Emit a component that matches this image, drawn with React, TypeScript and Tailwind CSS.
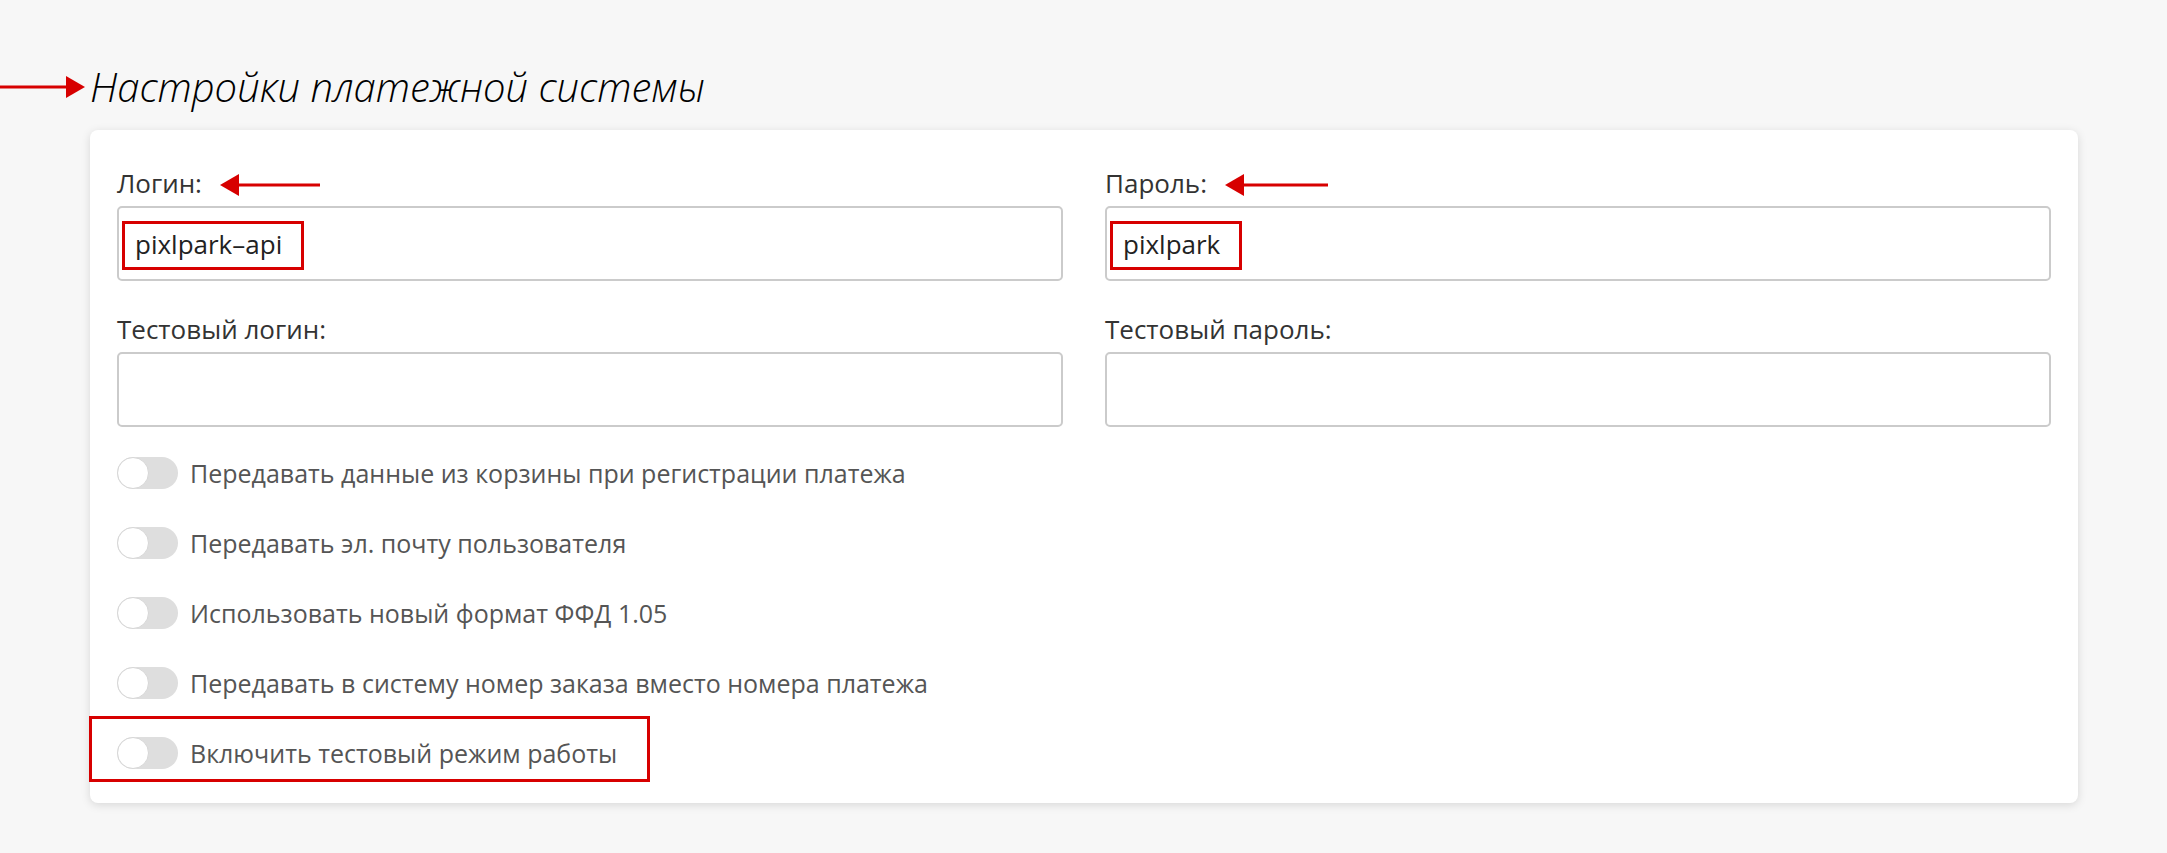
import React from 'react';

const font = { fontFamily: '"Open Sans", "Noto Sans", sans-serif' };

function Arrow({ dir, width }: { dir: 'left' | 'right'; width: number }) {
  // red annotation arrow: line + triangular head
  const h = 22;
  const mid = h / 2;
  return (
    <svg width={width} height={h} viewBox={`0 0 ${width} ${h}`} className="block shrink-0">
      {dir === 'right' ? (
        <>
          <rect x={0} y={mid - 1.5} width={width - 18} height={3} fill="#d70000" />
          <polygon points={`${width - 19},0 ${width},${mid} ${width - 19},${h}`} fill="#d70000" />
        </>
      ) : (
        <>
          <rect x={18} y={mid - 1.5} width={width - 18} height={3} fill="#d70000" />
          <polygon points={`19,0 0,${mid} 19,${h}`} fill="#d70000" />
        </>
      )}
    </svg>
  );
}

function Field({
  label,
  value,
  boxWidth,
  arrowWidth,
}: {
  label: string;
  value?: string;
  boxWidth?: number;
  arrowWidth?: number;
}) {
  return (
    <div className="flex flex-col">
      <div className="flex items-center h-[36px] mb-[5px]">
        <span className="text-[26px] leading-[36px] text-[#333]">{label}</span>
        {arrowWidth && (
          <div className="ml-[18px] mt-[4px]">
            <Arrow dir="left" width={arrowWidth} />
          </div>
        )}
      </div>
      <div className="relative">
        <input
          readOnly
          defaultValue={value ?? ''}
          style={font}
          className="w-full h-[75px] rounded-[5px] border-2 border-[#cbcbcb] bg-white px-[16px] text-[26px] text-[#222] outline-none"
        />
        {value && (
          <div
            className="absolute left-[5px] top-[15px] h-[49px] border-[3px] border-[#d70000] pointer-events-none"
            style={{ width: boxWidth }}
          />
        )}
      </div>
    </div>
  );
}

function Toggle({ label, boxed }: { label: string; boxed?: boolean }) {
  return (
    <div className="relative flex items-center h-[32px]">
      <div className="relative w-[61px] h-[32px] rounded-full bg-[#dedede] shrink-0">
        <div className="absolute left-0 top-0 w-[32px] h-[32px] rounded-full bg-white border border-[#d6d6d6]" />
      </div>
      <span className="ml-[12px] text-[25px] leading-[36px] text-[#555] whitespace-nowrap">{label}</span>
      {boxed && (
        <div className="absolute left-[-28px] top-[-21px] w-[561px] h-[66px] border-[3px] border-[#d70000] pointer-events-none" />
      )}
    </div>
  );
}

export default function App() {
  return (
    <div className="min-h-[853px] bg-[#f7f7f7] pt-[60px] pb-[40px]" style={font}>
      <div className="flex items-center mb-[17px]">
        <div className="mt-[1px]">
          <Arrow dir="right" width={85} />
        </div>
        <h1 className="ml-[5px] text-[40px] leading-[53px] italic font-light text-black">
          Настройки платежной системы
        </h1>
      </div>

      <div className="ml-[90px] mr-[89px] bg-white rounded-[8px] shadow-[0_2px_10px_rgba(0,0,0,0.13)] pt-[35px] pb-[34px] px-[27px]">
        <div className="grid grid-cols-2 gap-x-[42px] gap-y-[30px]">
          <Field label="Логин:" value="pixlpark–api" boxWidth={182} arrowWidth={100} />
          <Field label="Пароль:" value="pixlpark" boxWidth={132} arrowWidth={103} />
          <Field label="Тестовый логин:" />
          <Field label="Тестовый пароль:" />
        </div>

        <div className="mt-[30px] flex flex-col gap-[38px]">
          <Toggle label="Передавать данные из корзины при регистрации платежа" />
          <Toggle label="Передавать эл. почту пользователя" />
          <Toggle label="Использовать новый формат ФФД 1.05" />
          <Toggle label="Передавать в систему номер заказа вместо номера платежа" />
          <Toggle label="Включить тестовый режим работы" boxed />
        </div>
      </div>
    </div>
  );
}
